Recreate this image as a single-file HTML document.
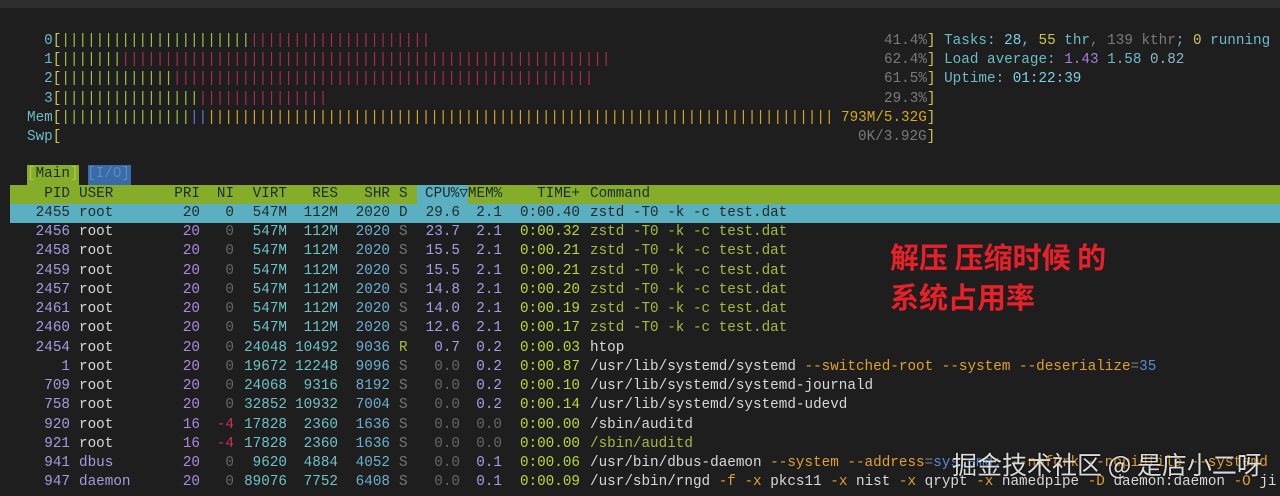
<!DOCTYPE html>
<html><head><meta charset="utf-8"><style>
body{margin:0;width:1280px;height:496px;background:#1e1e1e;overflow:hidden;position:relative;font-family:"Liberation Mono","DejaVu Sans Mono",monospace;font-size:14.3px;color:#d8d8d8}
.top{position:absolute;left:0;top:0;width:1280px;height:8px;background:#2e2e2e}
.l{position:absolute;white-space:pre;line-height:19px;height:19px}
.c{color:#6cbcc8}.y{color:#c8c850}.g{color:#a0c040}.r{color:#b02850}.b{color:#7070d8}.o{color:#d4a820}.gr{color:#7a7a7a}
.tab1{position:absolute;left:27px;top:165px;width:52px;height:20px;background:#86ad2a}
.tab2{position:absolute;left:88px;top:165px;width:43px;height:20px;background:#3a6aa8}
.hdr{position:absolute;left:10px;top:185px;width:1270px;height:19px;background:#86ad2a}
.hcpu{position:absolute;left:417px;top:185px;width:51px;height:19px;background:#5ab0c0}
.sel{position:absolute;left:10px;top:204px;width:1270px;height:19px;background:#5ab0c0}
.row{position:absolute;left:0;height:19px;line-height:19px;width:1280px;white-space:pre;overflow:hidden}
.row span{position:absolute;top:0}
.row span span{position:static}
.p{right:1210px;color:#a49be0}.u{left:79px}.pr{right:1080px;color:#a78be0}.ni{right:1046px;color:#666}
.vi{right:993px;color:#6cc3c8}.re{right:942px;color:#6cc3c8}.sh{right:890px;color:#6cb0d0}.s{left:399px;color:#777}
.cp{right:820px;color:#a99be8}.me{right:778px;color:#a99be8}.ti{right:700px;color:#b8d838}.cm{left:590px}
.dk span{color:#1e2a2a!important}
.th{color:#a8b840}.og{color:#e0a030}.bl{color:#5a8ad8}
.red{position:absolute;left:890px;color:#e8202a;font-family:"Noto Sans CJK SC",sans-serif;font-weight:bold;font-size:29px;line-height:40px;white-space:pre}
.wm{position:absolute;left:952px;top:446px;color:rgba(255,255,255,0.85);font-family:"Noto Sans CJK SC",sans-serif;font-size:25px;white-space:pre;text-shadow:0 0 2px #000}
</style></head><body>
<div class="top"></div>
<div class="l" style="left:27px;top:32px"><span class="c">  0</span><span class="y">[</span><span class="g">||||||||||||||||||||||</span><span class="r">|||||||||||||||||||||</span></div>
<div class="l" style="left:27px;top:51px"><span class="c">  1</span><span class="y">[</span><span class="g">|||||||</span><span class="r">|||||||||||||||||||||||||||||||||||||||||||||||||||||||||</span></div>
<div class="l" style="left:27px;top:70px"><span class="c">  2</span><span class="y">[</span><span class="g">|||||||||||||</span><span class="r">|||||||||||||||||||||||||||||||||||||||||||||||||</span></div>
<div class="l" style="left:27px;top:90px"><span class="c">  3</span><span class="y">[</span><span class="g">||||||||||||||||</span><span class="r">|||||||||||||||</span></div>
<div class="l" style="left:27px;top:109px"><span class="c">Mem</span><span class="y">[</span><span class="g">|||||||||||||||</span><span class="b">||</span><span class="o">|||||||||||||||||||||||||||||||||||||||||||||||||||||||||||||||||||||||||</span></div>
<div class="l" style="left:27px;top:128px"><span class="c">Swp</span><span class="y">[</span></div>
<div class="l" style="left:884px;top:32px"><span class="gr">41.4%</span><span class="y">]</span> <span class="c">Tasks: </span><span style="color:#7fd0e0">28</span><span class="c">, </span><span class="y">55</span><span class="c"> thr</span><span class="gr">, 139 kthr</span><span class="c">; </span><span class="y">0</span><span class="c"> running</span></div>
<div class="l" style="left:884px;top:51px"><span class="gr">62.4%</span><span class="y">]</span> <span class="c">Load average: </span><span style="color:#a080e0">1.43</span><span class="c"> 1.58 </span><span style="color:#8ab8c8">0.82</span></div>
<div class="l" style="left:884px;top:70px"><span class="gr">61.5%</span><span class="y">]</span> <span class="c">Uptime: </span><span style="color:#7fd0e0">01:22:39</span></div>
<div class="l" style="left:884px;top:90px"><span class="gr">29.3%</span><span class="y">]</span></div>
<div class="l" style="left:841px;top:109px"><span class="o">793M/5.32G</span><span class="y">]</span></div>
<div class="l" style="left:858px;top:128px"><span class="gr">0K/3.92G</span><span class="y">]</span></div>
<div class="tab1"></div><div class="tab2"></div>
<div class="l" style="left:27px;top:165px"><span style="color:#a8d040">[</span><span style="color:#1e2a2a">Main</span><span style="color:#a8d040">]</span> <span style="color:#5a8ac8">[I/O]</span></div>
<div class="hdr"></div><div class="hcpu"></div><div class="sel"></div>
<div class="row dk" style="top:185px"><span class="p">PID</span><span class="u">USER</span><span class="pr">PRI</span><span class="ni">NI</span><span class="vi">VIRT</span><span class="re">RES</span><span class="sh">SHR</span><span class="s">S</span><span style="left:425px">CPU%▽MEM%</span><span class="ti">TIME+</span><span class="cm">Command</span></div>
<div class="row dk" style="top:204px"><span class="p">2455</span><span class="u">root</span><span class="pr">20</span><span class="ni">0</span><span class="vi">547M</span><span class="re">112M</span><span class="sh">2020</span><span class="s">D</span><span class="cp">29.6</span><span class="me">2.1</span><span class="ti">0:00.40</span><span class="cm">zstd -T0 -k -c test.dat</span></div>
<div class="row" style="top:223px"><span class="p">2456</span><span class="u">root</span><span class="pr">20</span><span class="ni">0</span><span class="vi">547M</span><span class="re">112M</span><span class="sh">2020</span><span class="s">S</span><span class="cp">23.7</span><span class="me">2.1</span><span class="ti">0:00.32</span><span class="cm th">zstd -T0 -k -c test.dat</span></div>
<div class="row" style="top:242px"><span class="p">2458</span><span class="u">root</span><span class="pr">20</span><span class="ni">0</span><span class="vi">547M</span><span class="re">112M</span><span class="sh">2020</span><span class="s">S</span><span class="cp">15.5</span><span class="me">2.1</span><span class="ti">0:00.21</span><span class="cm th">zstd -T0 -k -c test.dat</span></div>
<div class="row" style="top:262px"><span class="p">2459</span><span class="u">root</span><span class="pr">20</span><span class="ni">0</span><span class="vi">547M</span><span class="re">112M</span><span class="sh">2020</span><span class="s">S</span><span class="cp">15.5</span><span class="me">2.1</span><span class="ti">0:00.21</span><span class="cm th">zstd -T0 -k -c test.dat</span></div>
<div class="row" style="top:281px"><span class="p">2457</span><span class="u">root</span><span class="pr">20</span><span class="ni">0</span><span class="vi">547M</span><span class="re">112M</span><span class="sh">2020</span><span class="s">S</span><span class="cp">14.8</span><span class="me">2.1</span><span class="ti">0:00.20</span><span class="cm th">zstd -T0 -k -c test.dat</span></div>
<div class="row" style="top:300px"><span class="p">2461</span><span class="u">root</span><span class="pr">20</span><span class="ni">0</span><span class="vi">547M</span><span class="re">112M</span><span class="sh">2020</span><span class="s">S</span><span class="cp">14.0</span><span class="me">2.1</span><span class="ti">0:00.19</span><span class="cm th">zstd -T0 -k -c test.dat</span></div>
<div class="row" style="top:319px"><span class="p">2460</span><span class="u">root</span><span class="pr">20</span><span class="ni">0</span><span class="vi">547M</span><span class="re">112M</span><span class="sh">2020</span><span class="s">S</span><span class="cp">12.6</span><span class="me">2.1</span><span class="ti">0:00.17</span><span class="cm th">zstd -T0 -k -c test.dat</span></div>
<div class="row" style="top:339px"><span class="p">2454</span><span class="u">root</span><span class="pr">20</span><span class="ni">0</span><span class="vi">24048</span><span class="re">10492</span><span class="sh">9036</span><span class="s" style="color:#a8c030">R</span><span class="cp">0.7</span><span class="me">0.2</span><span class="ti">0:00.03</span><span class="cm">htop</span></div>
<div class="row" style="top:358px"><span class="p">1</span><span class="u">root</span><span class="pr">20</span><span class="ni">0</span><span class="vi">19672</span><span class="re">12248</span><span class="sh">9096</span><span class="s">S</span><span class="cp" style="color:#666">0.0</span><span class="me">0.2</span><span class="ti">0:00.87</span><span class="cm">/usr/lib/systemd/systemd <span class="og">--switched-root --system --deserialize</span><span class="gr">=</span><span class="bl">35</span></span></div>
<div class="row" style="top:377px"><span class="p">709</span><span class="u">root</span><span class="pr">20</span><span class="ni">0</span><span class="vi">24068</span><span class="re">9316</span><span class="sh">8192</span><span class="s">S</span><span class="cp" style="color:#666">0.0</span><span class="me">0.2</span><span class="ti">0:00.10</span><span class="cm">/usr/lib/systemd/systemd-journald</span></div>
<div class="row" style="top:396px"><span class="p">758</span><span class="u">root</span><span class="pr">20</span><span class="ni">0</span><span class="vi">32852</span><span class="re">10932</span><span class="sh">7004</span><span class="s">S</span><span class="cp" style="color:#666">0.0</span><span class="me">0.2</span><span class="ti">0:00.14</span><span class="cm">/usr/lib/systemd/systemd-udevd</span></div>
<div class="row" style="top:416px"><span class="p">920</span><span class="u">root</span><span class="pr">16</span><span class="ni" style="color:#d0305a">-4</span><span class="vi">17828</span><span class="re">2360</span><span class="sh">1636</span><span class="s">S</span><span class="cp" style="color:#666">0.0</span><span class="me" style="color:#666">0.0</span><span class="ti">0:00.00</span><span class="cm">/sbin/auditd</span></div>
<div class="row" style="top:435px"><span class="p">921</span><span class="u">root</span><span class="pr">16</span><span class="ni" style="color:#d0305a">-4</span><span class="vi">17828</span><span class="re">2360</span><span class="sh">1636</span><span class="s">S</span><span class="cp" style="color:#666">0.0</span><span class="me" style="color:#666">0.0</span><span class="ti">0:00.00</span><span class="cm th">/sbin/auditd</span></div>
<div class="row" style="top:454px"><span class="p">941</span><span class="u" style="color:#a49be0">dbus</span><span class="pr">20</span><span class="ni">0</span><span class="vi">9620</span><span class="re">4884</span><span class="sh">4052</span><span class="s">S</span><span class="cp" style="color:#666">0.0</span><span class="me">0.1</span><span class="ti">0:00.06</span><span class="cm">/usr/bin/dbus-daemon <span class="og">--system --address</span><span class="gr">=</span><span class="bl">systemd:</span> <span class="og">--nofork --nopidfile --systemd</span></span></div>
<div class="row" style="top:473px"><span class="p">947</span><span class="u" style="color:#a49be0">daemon</span><span class="pr">20</span><span class="ni">0</span><span class="vi">89076</span><span class="re">7752</span><span class="sh">6408</span><span class="s">S</span><span class="cp" style="color:#666">0.0</span><span class="me">0.1</span><span class="ti">0:00.09</span><span class="cm">/usr/sbin/rngd <span class="og">-f -x</span> pkcs11 <span class="og">-x</span> nist <span class="og">-x</span> qrypt <span class="og">-x</span> namedpipe <span class="og">-D</span> daemon:daemon <span class="og">-O</span> ji</span></div>
<div class="red" style="top:236px">解压 压缩时候 的</div>
<div class="red" style="top:276px">系统占用率</div>
<div class="wm">掘金技术社区 @ 是店小二呀</div>
</body></html>
